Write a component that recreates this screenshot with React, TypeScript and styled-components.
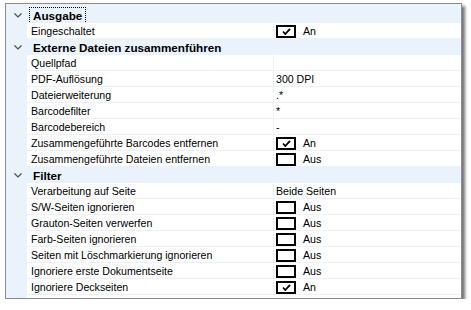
import React from "react";
import styled, { createGlobalStyle } from "styled-components";

const GlobalStyle = createGlobalStyle`
  body {
    margin: 0;
    background: #ffffff;
    font-family: "Liberation Sans", Arial, sans-serif;
    font-size: 10.6px;
    color: #000;
  }
`;

const Panel = styled.div`
  margin: 3px 0 0 5px;
  width: 455px;
  height: 294px;
  border: 1px solid #8c8c8c;
  background: linear-gradient(to right, #eaf2fb 21px, #ffffff 21px);
  box-shadow: 3px 3px 3px rgba(0, 0, 0, 0.55);
  display: flex;
  flex-direction: column;
`;

const Grid = styled.div`
  display: flex;
  flex-direction: column;
  padding-top: 3px;
  background: #eaf2fb;
`;

const CategoryRow = styled.div`
  display: flex;
  align-items: center;
  height: 16px;
  background: #eaf2fb;
`;

const Chevron = styled.div`
  width: 21px;
  display: flex;
  justify-content: center;
  align-items: center;
  padding-left: 1px;
`;

const CategoryLabel = styled.span<{ $focused?: boolean }>`
  margin-left: 2px;
  padding: 1px 3px;
  line-height: 13px;
  font-weight: bold;
  font-size: 11.7px;
  outline: ${(p) => (p.$focused ? "1px dotted #000" : "none")};
`;

const ItemRow = styled.div`
  display: grid;
  grid-template-columns: 21px 246px 1fr;
  height: 16px;
`;

const Gutter = styled.div`
  background: #eaf2fb;
`;

const NameCell = styled.div`
  background: #fff;
  border-bottom: 1px solid #edf2f8;
  padding-left: 4px;
  padding-top: 1px;
  line-height: 14px;
  white-space: nowrap;
  overflow: hidden;
`;

const ValueCell = styled.div`
  background: #fff;
  border-bottom: 1px solid #edf2f8;
  border-left: 1px solid #edf2f8;
  display: flex;
  align-items: center;
  padding-left: 2px;
  padding-top: 1px;
  line-height: 14px;
  white-space: nowrap;
`;

const CheckBox = styled.span`
  width: 16px;
  height: 9px;
  border: 2px solid #000;
  display: inline-flex;
  align-items: center;
  justify-content: center;
  margin-right: 7px;
  background: #fff;
`;

const Filler = styled.div`
  flex: 1;
  background: linear-gradient(to right, #eaf2fb 21px, #ffffff 21px);
`;

type Item = { name: string; value?: string; check?: boolean };
type Category = { title: string; items: Item[] };

const data: Category[] = [
  {
    title: "Ausgabe",
    items: [{ name: "Eingeschaltet", check: true }],
  },
  {
    title: "Externe Dateien zusammenführen",
    items: [
      { name: "Quellpfad", value: "" },
      { name: "PDF-Auflösung", value: "300 DPI" },
      { name: "Dateierweiterung", value: ".*" },
      { name: "Barcodefilter", value: "*" },
      { name: "Barcodebereich", value: "-" },
      { name: "Zusammengeführte Barcodes entfernen", check: true },
      { name: "Zusammengeführte Dateien entfernen", check: false },
    ],
  },
  {
    title: "Filter",
    items: [
      { name: "Verarbeitung auf Seite", value: "Beide Seiten" },
      { name: "S/W-Seiten ignorieren", check: false },
      { name: "Grauton-Seiten verwerfen", check: false },
      { name: "Farb-Seiten ignorieren", check: false },
      { name: "Seiten mit Löschmarkierung ignorieren", check: false },
      { name: "Ignoriere erste Dokumentseite", check: false },
      { name: "Ignoriere Deckseiten", check: true },
    ],
  },
];

const ChevronIcon = () => (
  <svg width="8" height="5" viewBox="0 0 8 5">
    <polyline points="0.5,0.5 4,4 7.5,0.5" fill="none" stroke="#4a4a4a" strokeWidth="1.2" />
  </svg>
);

const CheckMark = () => (
  <svg width="9" height="7" viewBox="0 0 9 7">
    <polyline points="1,3.5 3.3,6 8,0.8" fill="none" stroke="#000" strokeWidth="1.8" />
  </svg>
);

const Value: React.FC<{ item: Item }> = ({ item }) => {
  if (item.check === undefined) return <>{item.value}</>;
  return (
    <>
      <CheckBox>{item.check && <CheckMark />}</CheckBox>
      {item.check ? "An" : "Aus"}
    </>
  );
};

export default function App() {
  return (
    <>
      <GlobalStyle />
      <Panel>
        <Grid>
          {data.map((cat, ci) => (
            <React.Fragment key={cat.title}>
              <CategoryRow>
                <Chevron>
                  <ChevronIcon />
                </Chevron>
                <CategoryLabel $focused={ci === 0}>{cat.title}</CategoryLabel>
              </CategoryRow>
              {cat.items.map((item) => (
                <ItemRow key={item.name}>
                  <Gutter />
                  <NameCell>{item.name}</NameCell>
                  <ValueCell>
                    <Value item={item} />
                  </ValueCell>
                </ItemRow>
              ))}
            </React.Fragment>
          ))}
        </Grid>
        <Filler />
      </Panel>
    </>
  );
}
